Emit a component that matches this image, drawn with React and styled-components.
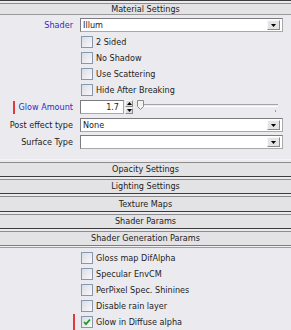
import styled, { createGlobalStyle } from "styled-components";

const Global = createGlobalStyle`
  body {
    margin: 0;
    background: #ebebef;
    font-family: "DejaVu Sans Condensed", "DejaVu Sans", sans-serif;
    font-size: 9px;
    color: #1c1c1c;
  }
`;

const Panel = styled.div`
  width: 291px;
  height: 330px;
  overflow: hidden;
  display: flex;
  flex-direction: column;
`;

const Rollout = styled.div`
  border-top: 1px solid ${(p) => (p.$first ? "#f4f4f6" : "#3c3c3c")};
  padding-top: 2px;
`;

const Band = styled.div`
  border-top: 1px solid #8c8c8c;
  border-bottom: ${(p) => (p.$closed ? "1px solid #9a9a9a" : "none")};
  height: ${(p) => p.$h || 13}px;
  background: #e3e3e5;
  display: flex;
  align-items: center;
  justify-content: center;
  line-height: 1;
`;

const BottomRule = styled.div`
  height: 1px;
  border-top: 1px solid #7c7c7c;
  border-bottom: 1px solid #9c9c9c;
  background: #f2f2f4;
`;

const Section = styled.div`
  display: flex;
  flex-direction: column;
  padding-top: ${(p) => p.$top || 0}px;
  padding-bottom: ${(p) => p.$bottom || 0}px;
`;

const FieldRow = styled.div`
  display: flex;
  align-items: center;
  height: 14px;
  margin-top: ${(p) => p.$mt || 0}px;
`;

const Label = styled.div`
  width: 73px;
  margin-right: 7px;
  display: flex;
  justify-content: flex-end;
  align-items: center;
  gap: 4px;
  color: ${(p) => (p.$blue ? "#2d2dc4" : "#1c1c1c")};
  white-space: nowrap;
`;

const Marker = styled.span`
  display: inline-block;
  width: 2px;
  height: ${(p) => p.$h || 13}px;
  background: #e03a3a;
  visibility: ${(p) => (p.$show ? "visible" : "hidden")};
`;

const Select = styled.div`
  width: 199px;
  height: 12px;
  background: #fff;
  border: 1px solid #a8a8ac;
  border-top-color: #7c7c80;
  border-left-color: #7c7c80;
  display: flex;
  align-items: center;
  padding-left: 2px;
  box-sizing: content-box;
`;

const SelectText = styled.span`
  flex: 1;
  white-space: nowrap;
`;

const DropButton = styled.div`
  width: 11px;
  height: 8px;
  margin-right: 2px;
  background: #e4e4e4;
  border: 1px solid #f8f8f8;
  border-right-color: #8a8a8a;
  border-bottom-color: #8a8a8a;
  display: flex;
  align-items: center;
  justify-content: center;
`;

const CheckRow = styled.div`
  display: flex;
  align-items: center;
  height: 16px;
  padding-left: 73px;
`;

const Box = styled.div`
  width: 10px;
  height: 10px;
  margin-left: 6px;
  margin-right: 3px;
  border: 1px solid #8797b0;
  background: linear-gradient(135deg, #dcdde4, #f8f8fa);
  display: flex;
  align-items: center;
  justify-content: center;
`;

const Spinner = styled.div`
  display: flex;
  align-items: stretch;
  height: 14px;
`;

const SpinInput = styled.div`
  width: 38px;
  background: #fff;
  border: 1px solid #a8a8ac;
  border-top-color: #7c7c80;
  border-left-color: #7c7c80;
  padding-right: 4px;
  display: flex;
  align-items: center;
  justify-content: flex-end;
`;

const SpinButtons = styled.div`
  width: 8px;
  margin-left: 1px;
  display: flex;
  flex-direction: column;
  gap: 1px;
`;

const SpinButton = styled.div`
  flex: 1;
  background: #dedede;
  border: 1px solid #f6f6f6;
  border-right-color: #8a8a8a;
  border-bottom-color: #8a8a8a;
  display: flex;
  align-items: center;
  justify-content: center;
`;

const Slider = styled.div`
  position: relative;
  width: 142px;
  height: 14px;
  margin-left: 3px;
`;

const Track = styled.div`
  position: absolute;
  left: 4px;
  right: 0;
  top: 4px;
  height: 1px;
  border-top: 1px solid #a4a4a8;
  border-bottom: 1px solid #ffffff;
`;

const Thumb = styled.svg`
  position: absolute;
  left: 1px;
  top: 0;
`;

const Tick = styled.div`
  position: absolute;
  right: 2px;
  top: 10px;
  width: 1px;
  height: 2px;
  background: #9a9a9a;
`;

const Arrow = ({ up }) => (
  <svg width="5" height="3" viewBox="0 0 5 3">
    <path d={up ? "M0 3 L2.5 0 L5 3 Z" : "M0 0 L5 0 L2.5 3 Z"} fill="#000" />
  </svg>
);

function Dropdown({ value }) {
  return (
    <Select>
      <SelectText>{value}</SelectText>
      <DropButton>
        <Arrow />
      </DropButton>
    </Select>
  );
}

function Check({ label, checked, marked }) {
  return (
    <CheckRow>
      <Marker $show={marked} $h={16} />
      <Box>
        {checked && (
          <svg width="8" height="8" viewBox="0 0 8 8">
            <path d="M1 4 L3 6.2 L7 1.5" stroke="#1f9a1f" strokeWidth="1.8" fill="none" />
          </svg>
        )}
      </Box>
      {label}
    </CheckRow>
  );
}

function Header({ title, first, h }) {
  return (
    <Rollout $first={first}>
      <Band $h={h}>{title}</Band>
    </Rollout>
  );
}

export default function App() {
  return (
    <Panel>
      <Global />
      <Rollout>
        <Band $h={10} $closed>Material Settings</Band>
      </Rollout>
      <Section $top={3} $bottom={10}>
        <FieldRow>
          <Label $blue>Shader</Label>
          <Dropdown value="Illum" />
        </FieldRow>
        <Section $top={2}>
          <Check label="2 Sided" />
          <Check label="No Shadow" />
          <Check label="Use Scattering" />
          <Check label="Hide After Breaking" />
        </Section>
        <FieldRow $mt={2}>
          <Label $blue>
            <Marker $show />
            Glow Amount
          </Label>
          <Spinner>
            <SpinInput>1.7</SpinInput>
            <SpinButtons>
              <SpinButton>
                <Arrow up />
              </SpinButton>
              <SpinButton>
                <Arrow />
              </SpinButton>
            </SpinButtons>
          </Spinner>
          <Slider>
            <Track />
            <Thumb width="7" height="10" viewBox="0 0 7 10">
              <path d="M0.5 0.5 H6.5 V6.5 L3.5 9.5 L0.5 6.5 Z" fill="#f2f2f2" stroke="#8a8a8a" />
            </Thumb>
            <Tick />
          </Slider>
        </FieldRow>
        <FieldRow $mt={4}>
          <Label>Post effect type</Label>
          <Dropdown value="None" />
        </FieldRow>
        <FieldRow $mt={3}>
          <Label>Surface Type</Label>
          <Dropdown value="" />
        </FieldRow>
      </Section>
      <Header title="Opacity Settings" first />
      <Header title="Lighting Settings" />
      <Header title="Texture Maps" h={14} />
      <Header title="Shader Params" />
      <Header title="Shader Generation Params" />
      <BottomRule />
      <Section $top={2}>
        <Check label="Gloss map DifAlpha" />
        <Check label="Specular EnvCM" />
        <Check label="PerPixel Spec. Shinines" />
        <Check label="Disable rain layer" />
        <Check label="Glow in Diffuse alpha" checked marked />
      </Section>
    </Panel>
  );
}
